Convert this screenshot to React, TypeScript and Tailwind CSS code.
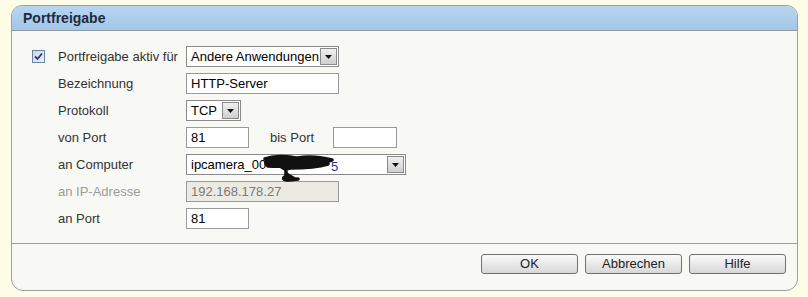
import React from "react";

const font = { fontFamily: '"Liberation Sans", Arial, sans-serif' };

function Checkbox() {
  return (
    <span className="flex h-[13px] w-[13px] items-center justify-center border border-[#6c82a3] bg-gradient-to-br from-[#cfd6e0] to-[#eef1f5]">
      <svg width="9" height="9" viewBox="0 0 9 9">
        <path d="M1 4.5 L3.5 7 L8 1.5" fill="none" stroke="#22378a" strokeWidth="1.8" />
      </svg>
    </span>
  );
}

function Arrow() {
  return (
    <span className="flex h-[17px] w-[17px] items-center justify-center border border-[#8a8a8a] bg-gradient-to-b from-[#f0f0f0] to-[#cfcfcf]">
      <svg width="7" height="4" viewBox="0 0 7 4">
        <path d="M0 0 H7 L3.5 4 Z" fill="#111" />
      </svg>
    </span>
  );
}

function Select({ value, width, children }: { value: string; width: string; children?: React.ReactNode }) {
  return (
    <div className={`relative flex h-[21px] items-center justify-between border border-[#8a8a8a] bg-white pl-[4px] pr-[1px] ${width}`}>
      <span className="text-[13px] text-black">{value}</span>
      {children}
      <Arrow />
    </div>
  );
}

function Input({ value, width, disabled }: { value: string; width: string; disabled?: boolean }) {
  return (
    <div
      className={`flex h-[21px] items-center border border-[#9a9a9a] pl-[4px] text-[13px] ${width} ${
        disabled ? "bg-[#ebebe4] text-[#7a7a7a]" : "bg-white text-black"
      }`}
    >
      {value}
    </div>
  );
}

function Row({ label, check, muted, children }: { label: string; check?: boolean; muted?: boolean; children: React.ReactNode }) {
  return (
    <div className="flex h-[27px] items-center">
      <div className="w-[26px]">{check && <Checkbox />}</div>
      <div className={`w-[128px] text-[13px] ${muted ? "text-[#9c9c9c]" : "text-[#333]"}`}>{label}</div>
      {children}
    </div>
  );
}

function Button({ label }: { label: string }) {
  return (
    <button className="flex h-[20px] w-[97px] items-center justify-center rounded-[3px] border border-[#707070] bg-gradient-to-b from-[#fafafa] to-[#d8d8d8] text-[13px] text-[#222]">
      {label}
    </button>
  );
}

export default function App() {
  return (
    <div className="h-[297px] w-[808px] bg-[#fdfde8] pl-[11px] pt-[5px]" style={font}>
      <div className="flex h-[286px] w-[787px] flex-col rounded-t-[11px] rounded-b-[12px] border border-[#9aa0a0] bg-[#f8f8f4]">
        <div className="flex h-[25px] items-center rounded-t-[10px] border-b border-[#8f9aa2] bg-gradient-to-b from-[#b7d5ef] to-[#a3c7e8] pl-[11px] text-[14px] font-bold text-[#1c2c40]">
          Portfreigabe
        </div>

        <div className="flex flex-col pl-[20px] pt-[12px] pb-[11px]">
          <Row label="Portfreigabe aktiv für" check>
            <Select value="Andere Anwendungen" width="w-[153px]" />
          </Row>
          <Row label="Bezeichnung">
            <Input value="HTTP-Server" width="w-[153px]" />
          </Row>
          <Row label="Protokoll">
            <Select value="TCP" width="w-[55px]" />
          </Row>
          <Row label="von Port">
            <div className="flex items-center">
              <Input value="81" width="w-[63px]" />
              <span className="ml-[21px] w-[63px] text-[13px] text-[#333]">bis Port</span>
              <Input value="" width="w-[64px]" />
            </div>
          </Row>
          <Row label="an Computer">
            <Select value="ipcamera_00" width="w-[220px]">
              <span className="absolute left-[144px] top-[2px] text-[13px] text-[#2233aa]">5</span>
              <svg className="absolute left-[75px] top-[-1px]" width="74" height="28" viewBox="0 0 74 28">
                <path
                  d="M3 5 C14 1 26 3 36 4 C46 2 58 3 70 6 C64 9 54 10 44 11 C32 12 18 13 6 12 C3 10 3 8 6 7 C18 7 30 8 44 8 C54 8 62 8 66 10 C56 13 40 14 28 14 L24 15 L24 22 C20 24 21 26 27 26 L36 25"
                  fill="#111"
                  stroke="#111"
                  strokeWidth="3.5"
                  strokeLinejoin="round"
                  strokeLinecap="round"
                />
              </svg>
            </Select>
          </Row>
          <Row label="an IP-Adresse" muted>
            <Input value="192.168.178.27" width="w-[153px]" disabled />
          </Row>
          <Row label="an Port">
            <Input value="81" width="w-[63px]" />
          </Row>
        </div>

        <div className="flex justify-end gap-[7px] border-t border-[#9aa0a0] pr-[11px] pt-[10px]">
          <Button label="OK" />
          <Button label="Abbrechen" />
          <Button label="Hilfe" />
        </div>
      </div>
    </div>
  );
}
